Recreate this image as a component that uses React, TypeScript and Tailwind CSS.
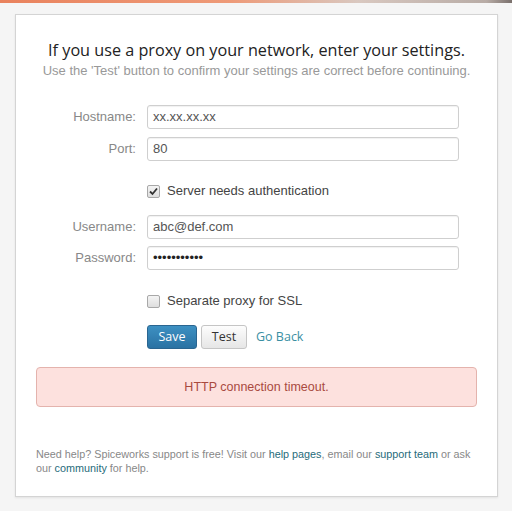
export default function App() {
  return (
    <div className="w-[512px] h-[511px] overflow-hidden bg-[#f5f5f5] font-['Liberation_Sans',Arial,sans-serif]">
      <div className="h-[3px] bg-[linear-gradient(to_right,#e9825d_0%,#ee9a78_45%,#d9c8c0_70%,#b8aca6_95%,#7a706c_100%)]" />
      <div className="ml-[15px] mt-[11px] w-[483px] h-[483px] bg-white border border-[#d4d4d4] shadow-[0_1px_2px_rgba(0,0,0,0.08)]">
        <div className="pt-[23px] text-center">
          <h1 className="font-['Open_Sans',sans-serif] text-[16.2px] leading-[24px] text-[#222]">
            If you use a proxy on your network, enter your settings.
          </h1>
          <p className="mt-[1px] text-[13px] leading-[16px] text-[#999]">
            Use the 'Test' button to confirm your settings are correct before continuing.
          </p>
        </div>

        <div className="mt-[26px] flex flex-col">
          <Field label="Hostname:" value="xx.xx.xx.xx" />
          <div className="h-[8px]" />
          <Field label="Port:" value="80" />
          <div className="mt-[22px] ml-[131px] flex items-center gap-[7px] h-[16px]">
            <Check checked />
            <span className="text-[13px] text-[#444]">Server needs authentication</span>
          </div>
          <div className="h-[16px]" />
          <Field label="Username:" value="abc@def.com" />
          <div className="h-[7px]" />
          <Field label="Password:" value="•••••••••••" password />
          <div className="mt-[23px] ml-[131px] flex items-center gap-[7px] h-[16px]">
            <Check />
            <span className="text-[13px] text-[#444]">Separate proxy for SSL</span>
          </div>
          <div className="mt-[16px] ml-[131px] flex items-center gap-[4px]">
            <button className="w-[50px] h-[24px] rounded-[3px] border border-[#2a6590] bg-[linear-gradient(#3d90c2,#2a72a3)] text-white font-['Open_Sans',sans-serif] text-[12.5px] leading-none">
              Save
            </button>
            <button className="w-[46px] h-[24px] rounded-[3px] border border-[#c5c5c5] bg-[linear-gradient(#fdfdfd,#e6e6e6)] text-[#333] font-['Open_Sans',sans-serif] text-[12.5px] leading-none">
              Test
            </button>
            <a className="ml-[5px] font-['Open_Sans',sans-serif] text-[12.5px] text-[#3a8fa3]">Go Back</a>
          </div>
          <div className="mt-[18px] mx-[20px] h-[40px] rounded-[4px] border border-[#e4b3ad] bg-[#fde1de] flex items-center justify-center text-[12.5px] text-[#a94a3f]">
            HTTP connection timeout.
          </div>
        </div>

        <p className="mt-[40px] pl-[20px] pr-[14px] text-[10.8px] leading-[14px] text-[#888]">
          Need help? Spiceworks support is free! Visit our <a className="text-[#1f6b7a]">help pages</a>, email our{" "}
          <a className="text-[#1f6b7a]">support team</a> or ask our <a className="text-[#1f6b7a]">community</a> for help.
        </p>
      </div>
    </div>
  )
}

function Field({ label, value, password }: { label: string; value: string; password?: boolean }) {
  return (
    <div className="flex items-center h-[24px]">
      <span className="w-[120px] text-right text-[13px] text-[#888]">{label}</span>
      <div className="ml-[11px] w-[312px] h-[24px] rounded-[3px] border border-[#cfcfcf] shadow-[inset_0_1px_1px_rgba(0,0,0,0.06)] flex items-center px-[5px] text-[13px] text-[#555]">
        <span className={password ? "text-[13px] text-[#222]" : ""}>{value}</span>
      </div>
    </div>
  )
}

function Check({ checked }: { checked?: boolean }) {
  return (
    <span className="w-[13px] h-[13px] rounded-[2px] border border-[#a8a8a8] bg-[linear-gradient(#f4f4f4,#dedede)] flex items-center justify-center">
      {checked && (
        <svg width="9" height="9" viewBox="0 0 9 9">
          <path d="M1 4.5 L3.5 7 L8 1.5" stroke="#333" strokeWidth="1.8" fill="none" />
        </svg>
      )}
    </span>
  )
}
